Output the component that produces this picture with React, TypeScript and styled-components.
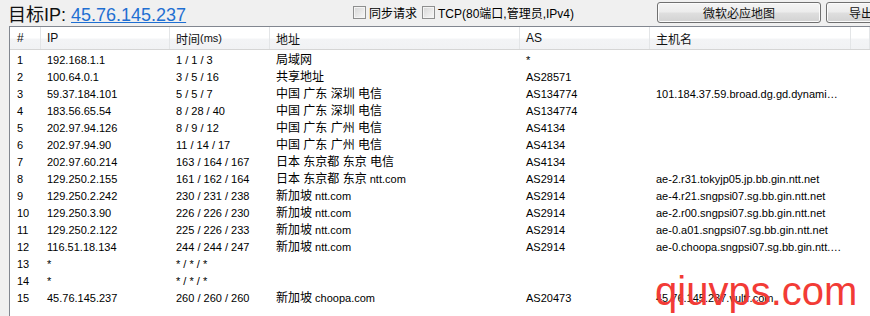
import styled, { createGlobalStyle } from "styled-components";

const GlobalStyle = createGlobalStyle`
  html, body {
    margin: 0;
    padding: 0;
    background: #f0f0f0;
    font-family: "Liberation Sans", "Noto Sans CJK SC", sans-serif;
    overflow: hidden;
  }
`;

const Page = styled.div`
  position: relative;
  width: 870px;
  height: 316px;
  overflow: hidden;
  background: #f0f0f0;
`;

const TopBar = styled.div`
  display: flex;
  align-items: center;
  height: 25px;
  padding-left: 8px;
  white-space: nowrap;
  & > * {
    flex-shrink: 0;
  }
`;

const Title = styled.div`
  width: 345px;
  font-size: 18px;
  color: #111;
`;

const TargetLink = styled.a`
  color: #1f6fd2;
  text-decoration: underline;
`;

const Options = styled.div`
  display: flex;
  align-items: center;
  gap: 5px;
  width: 304px;
  font-size: 12px;
`;

const CheckLabel = styled.label`
  display: flex;
  align-items: center;
  gap: 3px;
`;

const Box = styled.span`
  width: 11px;
  height: 11px;
  border: 1px solid #8e8f8f;
  background: linear-gradient(135deg, #d6d6d6, #f8f8f8);
  box-shadow: inset 0 0 0 1px #f4f4f4;
`;

const Buttons = styled.div`
  display: flex;
  gap: 5px;
`;

type ButtonProps = { $width: number };
const Button = styled.button<ButtonProps>`
  flex-shrink: 0;
  width: ${(p) => p.$width}px;
  height: 21px;
  padding: 0;
  border: 1px solid #707070;
  border-radius: 3px;
  background: linear-gradient(#f4f4f4, #ececec 48%, #dfdfdf 52%, #d2d2d2);
  box-shadow: inset 0 0 0 1px #fbfbfb;
  font-family: inherit;
  font-size: 12px;
  color: #111;
`;

const Table = styled.div`
  margin-left: 9px;
  margin-top: 1px;
  border-left: 1px solid #828790;
  border-top: 1px solid #828790;
  background: #fff;
  height: 300px;
`;

const cols = "31px 129px 100px 250px 130px 201px 1fr";

const HeaderRow = styled.div`
  display: grid;
  grid-template-columns: ${cols};
  height: 22px;
  background: linear-gradient(#ffffff 0%, #ffffff 50%, #f3f4f6 55%, #f1f2f4 100%);
  border-bottom: 1px solid #d5d5d5;
  font-size: 12px;
`;

const HeadCell = styled.div`
  display: flex;
  align-items: center;
  padding-left: 6px;
  border-right: 1px solid #e3e5e7;
  color: #111;
  &:first-child {
    padding-left: 7px;
  }
`;

const Small = styled.span`
  font-size: 11px;
`;

const Body = styled.div`
  padding-top: 2px;
`;

const Row = styled.div`
  display: grid;
  grid-template-columns: ${cols};
  height: 17px;
  line-height: 17px;
  font-size: 11px;
  color: #000;
`;

const Cell = styled.div`
  padding-left: 6px;
  padding-right: 8px;
  white-space: nowrap;
  overflow: hidden;
  text-overflow: ellipsis;
  &:first-child {
    padding-left: 7px;
  }
`;

const Place = styled.span`
  font-size: 12px;
`;

const Watermark = styled.div`
  position: absolute;
  left: 655px;
  top: 271px;
  font-family: "Liberation Sans", sans-serif;
  font-size: 40px;
  line-height: 1;
  color: #f23b36;
  pointer-events: none;
`;

type Hop = {
  ip: string;
  time: string;
  place: string;
  org?: string;
  as: string;
  host: string;
};

const hops: Hop[] = [
  { ip: "192.168.1.1", time: "1 / 1 / 3", place: "局域网", as: "*", host: "" },
  { ip: "100.64.0.1", time: "3 / 5 / 16", place: "共享地址", as: "AS28571", host: "" },
  { ip: "59.37.184.101", time: "5 / 5 / 7", place: "中国 广东 深圳 电信", as: "AS134774", host: "101.184.37.59.broad.dg.gd.dynamic.163data.com.cn" },
  { ip: "183.56.65.54", time: "8 / 28 / 40", place: "中国 广东 深圳 电信", as: "AS134774", host: "" },
  { ip: "202.97.94.126", time: "8 / 9 / 12", place: "中国 广东 广州 电信", as: "AS4134", host: "" },
  { ip: "202.97.94.90", time: "11 / 14 / 17", place: "中国 广东 广州 电信", as: "AS4134", host: "" },
  { ip: "202.97.60.214", time: "163 / 164 / 167", place: "日本 东京都 东京 电信", as: "AS4134", host: "" },
  { ip: "129.250.2.155", time: "161 / 162 / 164", place: "日本 东京都 东京", org: "ntt.com", as: "AS2914", host: "ae-2.r31.tokyjp05.jp.bb.gin.ntt.net" },
  { ip: "129.250.2.242", time: "230 / 231 / 238", place: "新加坡", org: "ntt.com", as: "AS2914", host: "ae-4.r21.sngpsi07.sg.bb.gin.ntt.net" },
  { ip: "129.250.3.90", time: "226 / 226 / 230", place: "新加坡", org: "ntt.com", as: "AS2914", host: "ae-2.r00.sngpsi07.sg.bb.gin.ntt.net" },
  { ip: "129.250.2.122", time: "225 / 226 / 233", place: "新加坡", org: "ntt.com", as: "AS2914", host: "ae-0.a01.sngpsi07.sg.bb.gin.ntt.net" },
  { ip: "116.51.18.134", time: "244 / 244 / 247", place: "新加坡", org: "ntt.com", as: "AS2914", host: "ae-0.choopa.sngpsi07.sg.bb.gin.ntt.net" },
  { ip: "*", time: "* / * / *", place: "", as: "", host: "" },
  { ip: "*", time: "* / * / *", place: "", as: "", host: "" },
  { ip: "45.76.145.237", time: "260 / 260 / 260", place: "新加坡", org: "choopa.com", as: "AS20473", host: "45.76.145.237.vultr.com" },
];

export default function App() {
  return (
    <Page>
      <GlobalStyle />
      <TopBar>
        <Title>
          目标IP: <TargetLink>45.76.145.237</TargetLink>
        </Title>
        <Options>
          <CheckLabel>
            <Box />
            同步请求
          </CheckLabel>
          <CheckLabel>
            <Box />
            TCP(80端口,管理员,IPv4)
          </CheckLabel>
        </Options>
        <Buttons>
          <Button $width={164}>微软必应地图</Button>
          <Button $width={70}>导出</Button>
        </Buttons>
      </TopBar>
      <Table>
        <HeaderRow>
          <HeadCell>#</HeadCell>
          <HeadCell>IP</HeadCell>
          <HeadCell>
            时间<Small>(ms)</Small>
          </HeadCell>
          <HeadCell>地址</HeadCell>
          <HeadCell>AS</HeadCell>
          <HeadCell>主机名</HeadCell>
          <HeadCell />
        </HeaderRow>
        <Body>
          {hops.map((h, i) => (
            <Row key={i}>
              <Cell>{i + 1}</Cell>
              <Cell>{h.ip}</Cell>
              <Cell>{h.time}</Cell>
              <Cell>
                <Place>{h.place}</Place>
                {h.org ? ` ${h.org}` : ""}
              </Cell>
              <Cell>{h.as}</Cell>
              <Cell>{h.host}</Cell>
              <Cell />
            </Row>
          ))}
        </Body>
      </Table>
      <Watermark>qiuvps.com</Watermark>
    </Page>
  );
}
